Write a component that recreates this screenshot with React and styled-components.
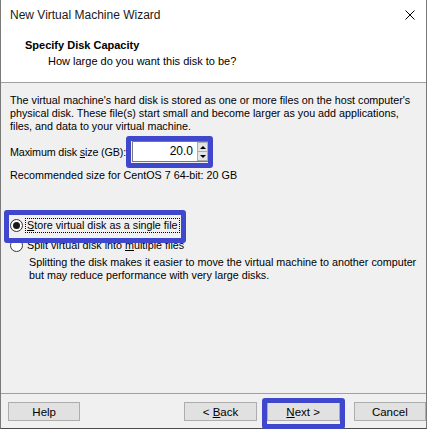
import React from 'react';
import styled, { createGlobalStyle } from 'styled-components';

const GlobalStyle = createGlobalStyle`
  html, body {
    margin: 0;
    padding: 0;
    background: #ffffff;
  }
  * {
    box-sizing: border-box;
  }
`;

const BLUE = '#3f47cc';

const Window = styled.div`
  width: 427px;
  height: 429px;
  display: flex;
  flex-direction: column;
  border-left: 1px solid #7a7a7a;
  border-right: 1px solid #7a7a7a;
  border-bottom: 1px solid #4a4a4a;
  background: #f0f0f0;
  font-family: "Liberation Sans", Arial, sans-serif;
  font-size: 10.75px;
  color: #000;
`;

const TitleBar = styled.div`
  height: 30px;
  background: #fff;
  display: flex;
  align-items: center;
  justify-content: space-between;
  padding: 0 10px 0 9px;
  font-size: 12px;
  color: #1a1a1a;
`;

const Close = styled.svg`
  width: 10px;
  height: 10px;
  margin-right: 1px;
`;

const Header = styled.div`
  height: 53px;
  background: #fff;
  border-bottom: 1px solid #a0a0a0;
  padding: 8px 0 0 24px;
`;

const HeaderTitle = styled.div`
  font-weight: bold;
  font-size: 11px;
  line-height: 14px;
`;

const HeaderSub = styled.div`
  padding-left: 23px;
  margin-top: 2px;
  line-height: 14px;
  font-size: 11px;
`;

const Content = styled.div`
  flex: 1;
  padding: 11px 9px 0 9px;
  display: flex;
  flex-direction: column;
  white-space: nowrap;
`;

const Para = styled.p`
  margin: 0;
  line-height: 13px;
`;

const SizeRow = styled.div`
  display: flex;
  align-items: center;
  margin-top: 8px;
  height: 22px;
`;

const SizeLabel = styled.span`
  width: 122px;
  letter-spacing: -0.15px;
`;

const Highlight = styled.div`
  position: relative;
  display: inline-block;
  align-self: flex-start;
`;

const HighlightRing = styled.span`
  position: absolute;
  top: ${p => p.$t}px;
  left: ${p => p.$l}px;
  right: ${p => p.$r}px;
  bottom: ${p => p.$b}px;
  border: 5px solid ${BLUE};
  border-radius: 3px;
  pointer-events: none;
`;

const Spin = styled.div`
  display: flex;
  width: 77px;
  height: 21px;
`;

const SpinInput = styled.div`
  flex: 1;
  background: #fff;
  border: 1px solid #7a7a7a;
  border-right: none;
  text-align: right;
  padding-right: 4px;
  line-height: 19px;
  font-size: 12px;
`;

const SpinButtons = styled.div`
  width: 12px;
  display: flex;
  flex-direction: column;
  border: 1px solid #7a7a7a;
  border-left: none;
  background: #fff;
`;

const SpinBtn = styled.div`
  flex: 1;
  background: #e5e5e5;
  border: 1px solid #adadad;
  display: flex;
  align-items: center;
  justify-content: center;
  &:first-child {
    border-bottom: none;
  }
`;

const Arrow = styled.span`
  width: 0;
  height: 0;
  border-left: 3px solid transparent;
  border-right: 3px solid transparent;
  ${p => p.$up ? 'border-bottom: 3px solid #000;' : 'border-top: 3px solid #000;'}
`;

const Recommended = styled.div`
  margin-top: 6px;
  line-height: 13px;
`;

const Options = styled.div`
  margin-top: 33px;
  display: flex;
  flex-direction: column;
`;

const RadioRow = styled.label`
  display: flex;
  align-items: center;
  height: 20px;
`;

const RadioCircle = styled.span`
  width: 13px;
  height: 13px;
  border-radius: 50%;
  border: 1px solid #333;
  background: #fff;
  display: flex;
  align-items: center;
  justify-content: center;
  margin-right: 2px;
  &::after {
    content: '';
    width: 7px;
    height: 7px;
    border-radius: 50%;
    background: ${p => p.$checked ? '#1a1a1a' : 'transparent'};
  }
`;

const RadioText = styled.span`
  padding: 0 1px;
  border: 1px dotted ${p => p.$focus ? '#000' : 'transparent'};
  line-height: 13px;
`;

const Description = styled.div`
  margin-top: 1px;
  padding-left: 19px;
  line-height: 13px;
`;

const Footer = styled.div`
  height: 35px;
  border-top: 1px solid #a0a0a0;
  display: flex;
  align-items: flex-start;
  padding: 8px 0 0 7px;
`;

const Button = styled.button`
  width: 73px;
  height: 19px;
  padding: 0;
  background: #e1e1e1;
  border: 1px solid #adadad;
  font-family: inherit;
  font-size: 11.5px;
  color: #000;
  margin-left: ${p => p.$gap || 0}px;
`;

export default function App() {
  return (
    <>
      <GlobalStyle />
      <Window>
        <TitleBar>
          <span>New Virtual Machine Wizard</span>
          <Close viewBox="0 0 10 10">
            <path d="M0.5 0.5 L9.5 9.5 M9.5 0.5 L0.5 9.5" stroke="#000" strokeWidth="1" fill="none" />
          </Close>
        </TitleBar>
        <Header>
          <HeaderTitle>Specify Disk Capacity</HeaderTitle>
          <HeaderSub>How large do you want this disk to be?</HeaderSub>
        </Header>
        <Content>
          <Para>
            The virtual machine's hard disk is stored as one or more files on the host computer's
            <br />
            physical disk. These file(s) start small and become larger as you add applications,
            <br />
            files, and data to your virtual machine.
          </Para>
          <SizeRow>
            <SizeLabel>Maximum disk <u>s</u>ize (GB):</SizeLabel>
            <Highlight>
              <Spin>
                <SpinInput>20.0</SpinInput>
                <SpinButtons>
                  <SpinBtn><Arrow $up /></SpinBtn>
                  <SpinBtn><Arrow /></SpinBtn>
                </SpinButtons>
              </Spin>
              <HighlightRing $t={-5} $l={-6} $r={-4} $b={-6} />
            </Highlight>
          </SizeRow>
          <Recommended>Recommended size for CentOS 7 64-bit: 20 GB</Recommended>
          <Options>
            <Highlight>
              <RadioRow>
                <RadioCircle $checked />
                <RadioText $focus><u>S</u>tore virtual disk as a single file</RadioText>
              </RadioRow>
              <HighlightRing $t={-5} $l={-6} $r={-6} $b={-8} />
            </Highlight>
            <RadioRow>
              <RadioCircle />
              <RadioText>Split virtual disk into <u>m</u>ultiple files</RadioText>
            </RadioRow>
            <Description>
              Splitting the disk makes it easier to move the virtual machine to another computer
              <br />
              but may reduce performance with very large disks.
            </Description>
          </Options>
        </Content>
        <Footer>
          <Button>Help</Button>
          <Button $gap={104}>&lt; <u>B</u>ack</Button>
          <Highlight style={{ marginLeft: 10 }}>
            <Button><u>N</u>ext &gt;</Button>
            <HighlightRing $t={-4} $l={-5} $r={-5} $b={-8} />
          </Highlight>
          <Button $gap={14}>Cancel</Button>
        </Footer>
      </Window>
    </>
  );
}
